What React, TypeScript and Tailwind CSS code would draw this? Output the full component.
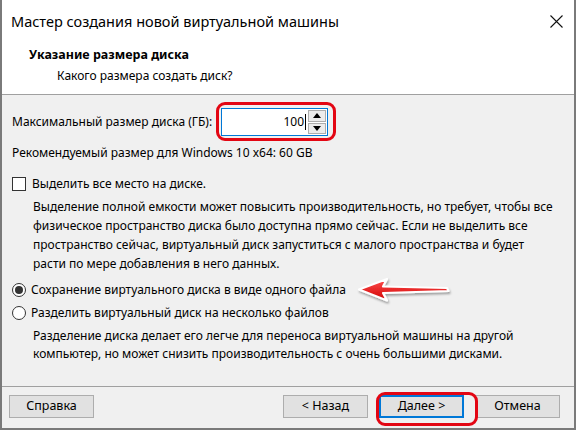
import React from 'react';

const Btn = ({ label, primary }: { label: string; primary?: boolean }) => (
    <div
        className={`w-[85px] h-[23px] flex items-center justify-center text-[12.5px] bg-[#e1e1e1] ${primary ? 'border-2 border-[#0078d7]' : 'border border-[#adadad]'}`}
    >
        {label}
    </div>
);

const Radio = ({ checked, label }: { checked?: boolean; label: string }) => (
    <div className="flex items-center h-[22px]">
        <div className="w-[14px] h-[14px] rounded-full border border-[#333] bg-white flex items-center justify-center">
            {checked && <div className="w-[8px] h-[8px] rounded-full bg-[#333]" />}
        </div>
        <span className="ml-[5px] whitespace-nowrap">{label}</span>
    </div>
);

export default function App() {
    return (
        <div className="relative w-[576px] h-[430px] overflow-hidden flex flex-col bg-[#f0f0f0] border-x-2 border-b-2 border-[#7a7a7a] text-black font-['Noto_Sans','Liberation_Sans',sans-serif]">
            {/* Header */}
            <div className="h-[95px] bg-white border-b border-[#a0a0a0] flex flex-col">
                <div className="h-[42px] flex items-center justify-between pl-[9px] pr-[11px] pt-[1px]">
                    <span className="text-[14.5px] whitespace-nowrap">Мастер создания новой виртуальной машины</span>
                    <svg width="13" height="13" viewBox="0 0 13 13">
                        <path d="M0.5 0.5 L12.5 12.5 M12.5 0.5 L0.5 12.5" stroke="#111" strokeWidth="1.1" />
                    </svg>
                </div>
                <div className="pl-[27px] text-[12.5px] font-bold leading-[20px] mt-[3px]">Указание размера диска</div>
                <div className="pl-[55px] text-[12px] leading-[20px] mt-[1px]">Какого размера создать диск?</div>
            </div>

            {/* Body */}
            <div className="flex-1 flex flex-col pl-[10px] text-[12px]">
                <div className="flex items-center mt-[13px] h-[28px]">
                    <span className="whitespace-nowrap w-[209px]">Максимальный размер диска (ГБ):</span>
                    <div className="flex h-[28px] w-[107px] bg-white border border-[#0078d7]">
                        <div className="flex-1 flex items-center justify-end pr-[1px]">
                            <span>100</span>
                            <span className="w-px h-[16px] bg-black ml-px" />
                        </div>
                        <div className="w-[20px] flex flex-col gap-px p-px bg-white">
                            <div className="flex-1 bg-[#ececec] border border-[#adadad] flex items-center justify-center">
                                <svg width="8" height="5" viewBox="0 0 8 5"><path d="M0 5 L4 0 L8 5 Z" fill="#000" /></svg>
                            </div>
                            <div className="flex-1 bg-[#ececec] border border-[#adadad] flex items-center justify-center">
                                <svg width="8" height="5" viewBox="0 0 8 5"><path d="M0 0 L8 0 L4 5 Z" fill="#000" /></svg>
                            </div>
                        </div>
                    </div>
                </div>

                <div className="mt-[8px] leading-[18px] whitespace-nowrap">Рекомендуемый размер для Windows 10 x64: 60 GB</div>

                <div className="flex items-center mt-[13px] h-[18px]">
                    <div className="w-[14px] h-[14px] border border-[#333] bg-white" />
                    <span className="ml-[6px] whitespace-nowrap">Выделить все место на диске.</span>
                </div>

                <div className="ml-[21px] mt-[4px] leading-[19px] whitespace-nowrap">
                    <div>Выделение полной емкости может повысить производительность, но требует, чтобы все</div>
                    <div>физическое пространство диска было доступна прямо сейчас. Если не выделить все</div>
                    <div>пространство сейчас, виртуальный диск запуститься с малого пространства и будет</div>
                    <div>расти по мере добавления в него данных.</div>
                </div>

                <div className="mt-[6px] flex flex-col gap-px">
                    <Radio checked label="Сохранение виртуального диска в виде одного файла" />
                    <Radio label="Разделить виртуальный диск на несколько файлов" />
                </div>

                <div className="ml-[21px] mt-[3px] leading-[18px] whitespace-nowrap">
                    <div>Разделение диска делает его легче для переноса виртуальной машины на другой</div>
                    <div>компьютер, но может снизить производительность с очень большими дисками.</div>
                </div>
            </div>

            {/* Footer */}
            <div className="h-[42px] border-t border-[#a0a0a0] flex items-center px-[7px] pb-[2px]">
                <Btn label="Справка" />
                <div className="ml-auto flex gap-[11px] mr-[7px]">
                    <Btn label="< Назад" />
                    <Btn label="Далее >" primary />
                    <Btn label="Отмена" />
                </div>
            </div>

            {/* Annotations */}
            <div className="absolute left-[214px] top-[102px] w-[120px] h-[39px] border-[3px] border-[#e30613] rounded-[9px]" />
            <div className="absolute left-[374px] top-[392px] w-[102px] h-[34px] border-[3px] border-[#e30613] rounded-[9px]" />
            <svg className="absolute left-[353px] top-[276px]" width="100" height="30" viewBox="0 0 100 30">
                <defs>
                    <linearGradient id="ar" x1="0" y1="0" x2="0" y2="1">
                        <stop offset="0" stopColor="#ff5050" />
                        <stop offset="1" stopColor="#d00000" />
                    </linearGradient>
                    <filter id="sh" x="-10%" y="-30%" width="130%" height="180%">
                        <feDropShadow dx="1" dy="2" stdDeviation="1.3" floodColor="#000" floodOpacity="0.35" />
                    </filter>
                </defs>
                <path
                    d="M4 13.5 L32 3 L28 10.5 L92 12 L93.5 15 L28 17 L32 24.5 Z"
                    fill="url(#ar)"
                    stroke="#fff"
                    strokeWidth="2.2"
                    strokeLinejoin="round"
                    filter="url(#sh)"
                />
            </svg>
        </div>
    );
}
